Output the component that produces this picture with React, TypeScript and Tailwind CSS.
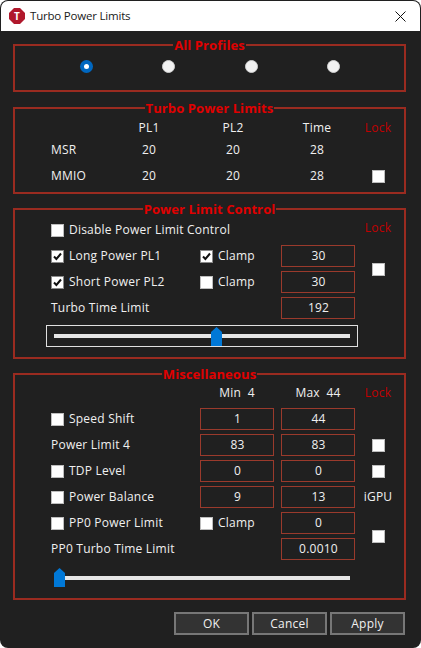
import React from "react";

const font = { fontFamily: '"Open Sans", "Noto Sans", sans-serif' };

function Group({ title, children, className = "" }: { title: string; children: React.ReactNode; className?: string }) {
  return (
    <fieldset className={"ml-[13px] mr-[15px] border-2 border-[#9a2b20] " + className}>
      <legend className="mx-auto h-[14px] px-[1px] text-[13px] font-bold leading-[14px] tracking-[0.1px] text-[#e00000]">{title}</legend>
      {children}
    </fieldset>
  );
}

function Check({ on = false }: { on?: boolean }) {
  return (
    <span className={"flex h-[13px] w-[13px] shrink-0 items-center justify-center border bg-white " + (on ? "border-[#8a8a8a]" : "border-[#bdbdbd]")}>
      {on && (
        <svg width="9" height="9" viewBox="0 0 9 9">
          <path d="M1 4.5 L3.4 7 L8 1.5" fill="none" stroke="#111" strokeWidth="2" />
        </svg>
      )}
    </span>
  );
}

function CheckLabel({ on, label }: { on?: boolean; label: string }) {
  return (
    <div className="flex items-center gap-[5px]">
      <Check on={on} />
      <span>{label}</span>
    </div>
  );
}

function Field({ v }: { v: string }) {
  return <div className="flex h-[22px] w-[74px] items-center justify-center border border-[#9a3a2c] pl-[1px]">{v}</div>;
}

function Thumb() {
  return (
    <svg width="11" height="19" viewBox="0 0 11 19" className="shrink-0">
      <polygon points="0,5 5.5,0 11,5 11,19 0,19" fill="#0078d7" />
    </svg>
  );
}

function Radio({ on = false }: { on?: boolean }) {
  return (
    <div className="flex justify-center">
      {on ? (
        <span className="flex h-[13px] w-[13px] items-center justify-center rounded-full bg-[#0067c0]">
          <span className="h-[5px] w-[5px] rounded-full bg-white" />
        </span>
      ) : (
        <span className="h-[13px] w-[13px] rounded-full border border-[#d0d0d0] bg-[#f2f2f2]" />
      )}
    </div>
  );
}

function Btn({ label }: { label: string }) {
  return (
    <button className="flex h-[23px] w-[75px] items-center justify-center border-2 border-[#777777] bg-[#333333] text-[#f0f0f0]">{label}</button>
  );
}

const cell = "flex h-[22px] items-center";
const lock = "text-[#c00000]";

export default function App() {
  return (
    <div style={font} className="h-[648px] w-[421px] overflow-hidden rounded-[8px] bg-[#202020] text-[12px] leading-[16px] tracking-[0.22px] text-[#f0f0f0]">
      <div className="mx-[1px] mt-[1px] flex h-[30px] items-center rounded-t-[7px] bg-white text-[#1a1a1a]">
        <svg width="16" height="16" viewBox="0 0 16 16" className="ml-[8px] shrink-0">
          <polygon points="5,0 11,0 16,5 16,11 11,16 5,16 0,11 0,5" fill="#b0182c" />
          <text x="8" y="11.5" textAnchor="middle" fontSize="10" fontWeight="700" fill="#fff" style={font}>T</text>
        </svg>
        <span className="ml-[5px] text-[11.5px] tracking-[-0.2px]">Turbo Power Limits</span>
        <svg width="11" height="11" viewBox="0 0 11 11" className="ml-auto mr-[14px] shrink-0">
          <path d="M0.5 0.5 L10.5 10.5 M10.5 0.5 L0.5 10.5" stroke="#111" strokeWidth="1" />
        </svg>
      </div>

      <Group title="All Profiles" className="mt-[7px]">
        <div className="grid h-[38px] grid-cols-4 pl-[30px] pr-[29px] pt-[8px]">
          <Radio on />
          <Radio />
          <Radio />
          <Radio />
        </div>
      </Group>

      <Group title="Turbo Power Limits" className="mt-[9px]">
        <div className="grid grid-cols-[51px_74px_74px_74px_28px] grid-rows-[22px_22px_22px] gap-x-[10px] pl-[36px] pt-[2px] pb-[9px]">
          <div />
          <div className="flex items-center justify-center">PL1</div>
          <div className="flex items-center justify-center">PL2</div>
          <div className="flex items-center justify-center">Time</div>
          <div className={"flex items-center justify-center " + lock}>Lock</div>
          <div className={cell}>MSR</div>
          <div className={cell + " justify-center"}>20</div>
          <div className={cell + " justify-center"}>20</div>
          <div className={cell + " justify-center"}>28</div>
          <div className={cell} />
          <div className={cell + " mt-[4px]"}>MMIO</div>
          <div className={cell + " mt-[4px] justify-center"}>20</div>
          <div className={cell + " mt-[4px] justify-center"}>20</div>
          <div className={cell + " mt-[4px] justify-center"}>28</div>
          <div className={cell + " mt-[4px] justify-center"}><Check /></div>
        </div>
      </Group>

      <Group title="Power Limit Control" className="mt-[8px]">
        <div className="grid grid-cols-[142px_74px_74px_32px] gap-x-[7px] gap-y-[4px] pl-[36px] pt-[3px]">
          <div className={cell + " col-span-3"}><CheckLabel label="Disable Power Limit Control" /></div>
          <div className={"-mt-[2px] " + cell + " justify-center " + lock}>Lock</div>
          <div className={cell}><CheckLabel on label="Long Power PL1" /></div>
          <div className={cell}><CheckLabel on label="Clamp" /></div>
          <Field v="30" />
          <div className="row-span-2 flex items-center justify-center"><Check /></div>
          <div className={cell}><CheckLabel on label="Short Power PL2" /></div>
          <div className={cell}><CheckLabel label="Clamp" /></div>
          <Field v="30" />
          <div className={cell + " col-span-2"}>Turbo Time Limit</div>
          <Field v="192" />
        </div>
        <div className="relative ml-[31px] mt-[6px] mb-[10px] flex h-[22px] w-[312px] items-center border border-[#e0e0e0] px-[7px]">
          <div className="h-[4px] w-full bg-[#e6e6e6]" />
          <div className="absolute left-[164px] top-[1px]"><Thumb /></div>
        </div>
      </Group>

      <Group title="Miscellaneous" className="mt-[8px]">
        <div className="grid grid-cols-[142px_74px_74px_32px] gap-x-[7px] gap-y-[4px] pl-[36px]">
          <div className="h-[23px]" />
          <div className="flex h-[23px] items-center justify-center">Min&nbsp; 4</div>
          <div className="flex h-[23px] items-center justify-center">Max&nbsp; 44</div>
          <div className={"flex h-[23px] items-center justify-center " + lock}>Lock</div>
          <div className={cell}><CheckLabel label="Speed Shift" /></div>
          <Field v="1" />
          <Field v="44" />
          <div />
          <div className={cell}>Power Limit 4</div>
          <Field v="83" />
          <Field v="83" />
          <div className={cell + " justify-center"}><Check /></div>
          <div className={cell}><CheckLabel label="TDP Level" /></div>
          <Field v="0" />
          <Field v="0" />
          <div className={cell + " justify-center"}><Check /></div>
          <div className={cell}><CheckLabel label="Power Balance" /></div>
          <Field v="9" />
          <Field v="13" />
          <div className={cell + " justify-center"}>iGPU</div>
          <div className={cell}><CheckLabel label="PP0 Power Limit" /></div>
          <div className={cell}><CheckLabel label="Clamp" /></div>
          <Field v="0" />
          <div className="row-span-2 flex items-center justify-center"><Check /></div>
          <div className={cell + " col-span-2"}>PP0 Turbo Time Limit</div>
          <Field v="0.0010" />
        </div>
        <div className="relative ml-[39px] mt-[8px] mb-[10px] flex h-[20px] w-[296px] items-center">
          <div className="h-[4px] w-full bg-[#e6e6e6]" />
          <div className="absolute left-0 top-0"><Thumb /></div>
        </div>
      </Group>

      <div className="mr-[16px] mt-[12px] flex justify-end gap-[3px]">
        <Btn label="OK" />
        <Btn label="Cancel" />
        <Btn label="Apply" />
      </div>
    </div>
  );
}
